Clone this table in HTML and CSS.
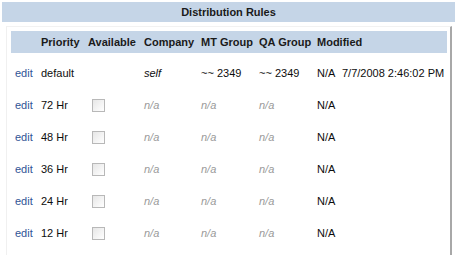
FILE: index.html
```html
<!DOCTYPE html>
<html>
<head>
<meta charset="utf-8">
<link rel="stylesheet" href="styles.css">
</head>
<body>
<div class="panel">
  <div class="title">Distribution Rules</div>
  <div class="content">
    <div class="row head">
      <span></span>
      <span>Priority</span>
      <span>Available</span>
      <span>Company</span>
      <span>MT Group</span>
      <span>QA Group</span>
      <span class="span2">Modified</span>
    </div>
    <div class="rows">
      <div class="row">
        <a class="edit">edit</a>
        <span>default</span>
        <span></span>
        <span class="self">self</span>
        <span>~~ 2349</span>
        <span>~~ 2349</span>
        <span>N/A</span>
        <span>7/7/2008 2:46:02 PM</span>
      </div>
      <div class="row">
        <a class="edit">edit</a><span>72 Hr</span><span><i class="cb"></i></span><span class="na">n/a</span><span class="na">n/a</span><span class="na">n/a</span><span>N/A</span><span></span>
      </div>
      <div class="row">
        <a class="edit">edit</a><span>48 Hr</span><span><i class="cb"></i></span><span class="na">n/a</span><span class="na">n/a</span><span class="na">n/a</span><span>N/A</span><span></span>
      </div>
      <div class="row">
        <a class="edit">edit</a><span>36 Hr</span><span><i class="cb"></i></span><span class="na">n/a</span><span class="na">n/a</span><span class="na">n/a</span><span>N/A</span><span></span>
      </div>
      <div class="row">
        <a class="edit">edit</a><span>24 Hr</span><span><i class="cb"></i></span><span class="na">n/a</span><span class="na">n/a</span><span class="na">n/a</span><span>N/A</span><span></span>
      </div>
      <div class="row">
        <a class="edit">edit</a><span>12 Hr</span><span><i class="cb"></i></span><span class="na">n/a</span><span class="na">n/a</span><span class="na">n/a</span><span>N/A</span><span></span>
      </div>
    </div>
  </div>
</div>
</body>
</html>
```
FILE: styles.css
```css
html, body {
  margin: 0;
  padding: 0;
  background: #ffffff;
}
body {
  font-family: "Liberation Sans", Arial, sans-serif;
  font-size: 11px;
  color: #0d0d0d;
  overflow: hidden;
  height: 255px;
}
.panel {
  padding: 2px 2px 0 2px;
}
.title {
  height: 20px;
  line-height: 20px;
  background: #c5d5e7;
  text-align: center;
  font-weight: bold;
  color: #1a1a1a;
}
.content {
  margin: 4px 3px 0 4px;
  border-left: 1px solid #f0f0f0;
  border-top: 1px solid #f2f2f2;
  border-right: 2px solid #a8a8a8;
  padding: 4px 3px 0 4px;
  height: 224px;
}
.row {
  display: grid;
  grid-template-columns: 26px 47px 56px 57px 58px 58px 25px 1fr;
  align-items: center;
  height: 32px;
  white-space: nowrap;
}
.row > * {
  padding-left: 4px;
}
.head {
  height: 22px;
  background: #c5d5e7;
  font-weight: bold;
  color: #1a1a1a;
}
.span2 {
  grid-column: span 2;
}
.rows {
  margin-top: 4px;
}
.edit {
  color: #2f5495;
  text-decoration: none;
}
.self {
  font-style: italic;
}
.na {
  font-style: italic;
  color: #9a9a9a;
}
.cb {
  display: block;
  width: 11px;
  height: 11px;
  margin-left: 4px;
  border: 1px solid #b8b8b8;
  background: linear-gradient(135deg, #e6e6e6, #ffffff);
}
```
